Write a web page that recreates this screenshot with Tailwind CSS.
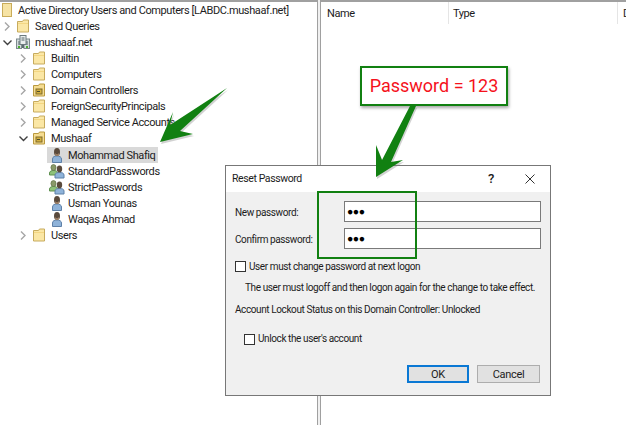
<!DOCTYPE html>
<html>
<head>
<meta charset="utf-8">
<script src="https://cdn.jsdelivr.net/npm/@tailwindcss/browser@4"></script>
</head>
<body class="m-0 overflow-hidden bg-white">
<svg width="0" height="0" class="absolute">
  <defs>
    <symbol id="chev-r" viewBox="0 0 13 16"><path d="M3 4.5 L7 8.5 L3 12.5" fill="none" stroke="#a6a6a6" stroke-width="1.4"/></symbol>
    <symbol id="chev-d" viewBox="0 0 13 16"><path d="M1.5 6.5 L5.5 10.5 L9.5 6.5" fill="none" stroke="#404040" stroke-width="1.4"/></symbol>
    <symbol id="folder" viewBox="0 0 16 16">
      <path d="M2.5 3.5 H7.5 L8.5 2 H13.5 V14 H2.5 Z" fill="#fbe7a5" stroke="#c7ab5e"/>
      <path d="M3 5.5 H13" stroke="#f3d682"/>
    </symbol>
    <symbol id="ou" viewBox="0 0 16 16">
      <path d="M2.5 3.5 H7.5 L8.5 2 H13.5 V14 H2.5 Z" fill="#f5dc91" stroke="#b9993f"/>
      <rect x="5" y="7" width="6" height="5" fill="#d4b03f" stroke="#7f6a2a"/>
      <rect x="6" y="9" width="3" height="1" fill="#4d4d2a"/>
    </symbol>
    <symbol id="domain" viewBox="0 0 16 16">
      <rect x="1.5" y="5" width="5" height="9.5" fill="#d3dcdc" stroke="#7d8a8d"/>
      <rect x="9" y="5" width="5.5" height="9.5" fill="#d3dcdc" stroke="#7d8a8d"/>
      <rect x="5" y="1.5" width="6" height="9" fill="#e9eeee" stroke="#6b7a7e"/>
      <path d="M6.5 4h3M6.5 6h3M3 8h2M11 8h2M3 10h2M11 10h2" stroke="#56666a"/>
      <rect x="3" y="12" width="2" height="2" fill="#4caf30"/>
      <rect x="11" y="12" width="2" height="2" fill="#4caf30"/>
      <rect x="7" y="11" width="2" height="3" fill="#5b6b6e"/>
    </symbol>
    <symbol id="user" viewBox="0 0 16 16">
      <path d="M3.5 15.5 V12 C3.5 9.5 6 9 8 9 C10.5 9 12.5 10 12.5 12 V15.5 Z" fill="#8fb3d9" stroke="#5f81a8"/>
      <ellipse cx="8" cy="5" rx="3" ry="4" fill="#5a4a3c"/>
      <path d="M6.5 6 Q8 9.5 9.7 6 L9.7 8.5 L6.5 8.5 Z" fill="#c79f7c"/>
    </symbol>
    <symbol id="group" viewBox="0 0 16 16">
      <path d="M0.5 12 V10 C0.5 8 3 7.5 4.5 7.5 C6.5 7.5 8.5 8 8.5 10 V12 Z" fill="#8ec27a" stroke="#5f9150"/>
      <ellipse cx="4.5" cy="4.5" rx="2.6" ry="3" fill="#8a9a6a" stroke="#55663c" stroke-width=".6"/>
      <path d="M6 15 V12 C6 10 8.5 9.5 10.5 9.5 C13 9.5 15 10 15 12 V15 Z" fill="#8fb3d9" stroke="#5f81a8"/>
      <ellipse cx="10.5" cy="6" rx="2.7" ry="3.4" fill="#5a4a3c"/>
    </symbol>
  </defs>
</svg>

<div class="relative flex h-[425px] w-[626px] overflow-hidden font-['Roboto',sans-serif] text-[11px] leading-4 tracking-[-0.4px] text-[#1c1c1c]">

  <!-- Tree pane -->
  <div class="h-full w-[318px] shrink-0 border-t-2 border-r border-[#a0a0a0] bg-white whitespace-nowrap [&_span]:pt-[2px]">
    <div class="flex h-4 items-center pl-[2px]"><i class="mr-[6px] h-[14px] w-[10px] shrink-0 border border-[#c9ac5a] bg-[#f6e3a4]"></i><span>Active Directory Users and Computers [LABDC.mushaaf.net]</span></div>

    <div class="flex h-4 items-center pl-[2px]"><svg class="h-4 w-[13px]"><use href="#chev-r"/></svg><svg class="h-4 w-4"><use href="#folder"/></svg><span class="ml-1">Saved Queries</span></div>
    <div class="flex h-4 items-center pl-[2px]"><svg class="h-4 w-[13px]"><use href="#chev-d"/></svg><svg class="h-4 w-4"><use href="#domain"/></svg><span class="ml-1">mushaaf.net</span></div>

    <div class="flex h-4 items-center pl-[18px]"><svg class="h-4 w-[13px]"><use href="#chev-r"/></svg><svg class="h-4 w-4"><use href="#folder"/></svg><span class="ml-1">Builtin</span></div>
    <div class="flex h-4 items-center pl-[18px]"><svg class="h-4 w-[13px]"><use href="#chev-r"/></svg><svg class="h-4 w-4"><use href="#folder"/></svg><span class="ml-1">Computers</span></div>
    <div class="flex h-4 items-center pl-[18px]"><svg class="h-4 w-[13px]"><use href="#chev-r"/></svg><svg class="h-4 w-4"><use href="#ou"/></svg><span class="ml-1">Domain Controllers</span></div>
    <div class="flex h-4 items-center pl-[18px]"><svg class="h-4 w-[13px]"><use href="#chev-r"/></svg><svg class="h-4 w-4"><use href="#folder"/></svg><span class="ml-1">ForeignSecurityPrincipals</span></div>
    <div class="flex h-4 items-center pl-[18px]"><svg class="h-4 w-[13px]"><use href="#chev-r"/></svg><svg class="h-4 w-4"><use href="#folder"/></svg><span class="ml-1">Managed Service Accounts</span></div>
    <div class="flex h-4 items-center pl-[18px]"><svg class="h-4 w-[13px]"><use href="#chev-d"/></svg><svg class="h-4 w-4"><use href="#ou"/></svg><span class="ml-1">Mushaaf</span></div>

    <div class="mt-px ml-[47px] flex h-4 w-[111px] items-center bg-[#d9d9d9] pl-[2px]"><svg class="h-4 w-4 shrink-0"><use href="#user"/></svg><span class="ml-[3px]">Mohammad Shafiq</span></div>
    <div class="ml-[47px] flex h-4 items-center pl-[2px]"><svg class="h-4 w-4"><use href="#group"/></svg><span class="ml-[3px]">StandardPasswords</span></div>
    <div class="ml-[47px] flex h-4 items-center pl-[2px]"><svg class="h-4 w-4"><use href="#group"/></svg><span class="ml-[3px]">StrictPasswords</span></div>
    <div class="ml-[47px] flex h-4 items-center pl-[2px]"><svg class="h-4 w-4"><use href="#user"/></svg><span class="ml-[3px]">Usman Younas</span></div>
    <div class="ml-[47px] flex h-4 items-center pl-[2px]"><svg class="h-4 w-4"><use href="#user"/></svg><span class="ml-[3px]">Waqas Ahmad</span></div>

    <div class="flex h-4 items-center pl-[18px]"><svg class="h-4 w-[13px]"><use href="#chev-r"/></svg><svg class="h-4 w-4"><use href="#folder"/></svg><span class="ml-1">Users</span></div>
  </div>

  <div class="h-full w-[2px] shrink-0 bg-[#f0f0f0]"></div>

  <!-- List pane -->
  <div class="h-full min-w-0 flex-1 border-t-2 border-l border-[#a0a0a0] bg-white">
    <div class="flex h-[22px] items-center overflow-hidden whitespace-nowrap">
      <div class="h-full w-[128px] shrink-0 border-r border-[#e5e5e5] pl-[6px] leading-[24px]">Name</div>
      <div class="h-full w-[169px] shrink-0 border-r border-[#e5e5e5] pl-[4px] leading-[24px]">Type</div>
      <div class="h-full pl-[5px] leading-[24px]">D</div>
    </div>
  </div>

  <!-- Callout -->
  <div class="absolute top-[66px] left-[360px] flex h-[40px] w-[148px] items-center justify-center border-2 border-[#118011] bg-white text-[18px] tracking-normal text-[#f5121c] shadow-[1px_2px_3px_rgba(0,0,0,0.35)]">Password = 123</div>

  <!-- Reset Password dialog -->
  <div class="absolute top-[165px] left-[225px] h-[231px] w-[326px] border border-[#777777] bg-[#f0f0f0] text-[10px]">
    <div class="flex h-[26px] items-center justify-between bg-white pr-[15px] pl-[6px]">
      <span class="text-[10.5px]">Reset Password</span>
      <div class="flex items-center gap-[31px]">
        <span class="text-[13px] font-medium">?</span>
        <svg class="h-[10px] w-[10px]" viewBox="0 0 10 10"><path d="M0.5 0.5 L9.5 9.5 M9.5 0.5 L0.5 9.5" stroke="#333" stroke-width="1"/></svg>
      </div>
    </div>
    <div class="pt-[9px] pr-[9px] pl-[9px]">
      <div class="flex h-[21px] items-center justify-between">
        <span class="pt-[2px]">New password:</span>
        <div class="flex h-[21px] w-[197px] items-center border border-[#7a7a7a] bg-white pl-[2px] text-[10.5px] font-bold tracking-[-0.5px] text-black">●●●</div>
      </div>
      <div class="mt-[6px] flex h-[21px] items-center justify-between">
        <span class="pt-[2px]">Confirm password:</span>
        <div class="flex h-[21px] w-[197px] items-center border border-[#7a7a7a] bg-white pl-[2px] text-[10.5px] font-bold tracking-[-0.5px] text-black">●●●</div>
      </div>
      <div class="mt-[11px] flex h-[12px] items-center">
        <span class="h-[11px] w-[11px] border border-[#333] bg-white"></span>
        <span class="ml-[3px] pt-[2px]">User must change password at next logon</span>
      </div>
      <div class="mt-[8px] ml-[10px] whitespace-nowrap">The user must logoff and then logon again for the change to take effect.</div>
      <div class="mt-[6px] whitespace-nowrap">Account Lockout Status on this Domain Controller: Unlocked</div>
      <div class="mt-[15px] ml-[9px] flex h-[12px] items-center">
        <span class="h-[11px] w-[11px] border border-[#333] bg-white"></span>
        <span class="ml-[3px]">Unlock the user's account</span>
      </div>
      <div class="mt-[20px] mr-[1px] flex justify-end gap-[8px]">
        <button class="h-[18px] w-[62px] border-2 border-[#0a78d4] bg-[#e1e1e1] text-[11px] leading-none tracking-[-0.3px] text-[#1c1c1c]">OK</button>
        <button class="h-[18px] w-[63px] border border-[#adadad] bg-[#e1e1e1] text-[11px] leading-none tracking-[-0.3px] text-[#1c1c1c]">Cancel</button>
      </div>
    </div>
  </div>

  <!-- Highlight rectangle -->
  <div class="pointer-events-none absolute top-[191px] left-[317px] h-[68px] w-[100px] border-2 border-[#118011]"></div>

  <!-- Annotation arrows -->
  <svg class="pointer-events-none absolute top-0 left-0" width="626" height="425" viewBox="0 0 626 425">
    <path d="M227 88 L170 125 L173 112 L160 142 L193 134 L180 131 Z" fill="#7f7f7f" opacity=".35" transform="translate(1 2)"/>
    <path d="M227 88 L170 125 L173 112 L160 142 L193 134 L180 131 Z" fill="#118011"/>
    <path d="M410 106 L382 160 L376 145 L376 177 L403 160 L391 162 L416 106 Z" fill="#7f7f7f" opacity=".35" transform="translate(1 2)"/>
    <path d="M410 106 L382 160 L376 145 L376 177 L403 160 L391 162 L416 106 Z" fill="#118011"/>
  </svg>
</div>
</body>
</html>
